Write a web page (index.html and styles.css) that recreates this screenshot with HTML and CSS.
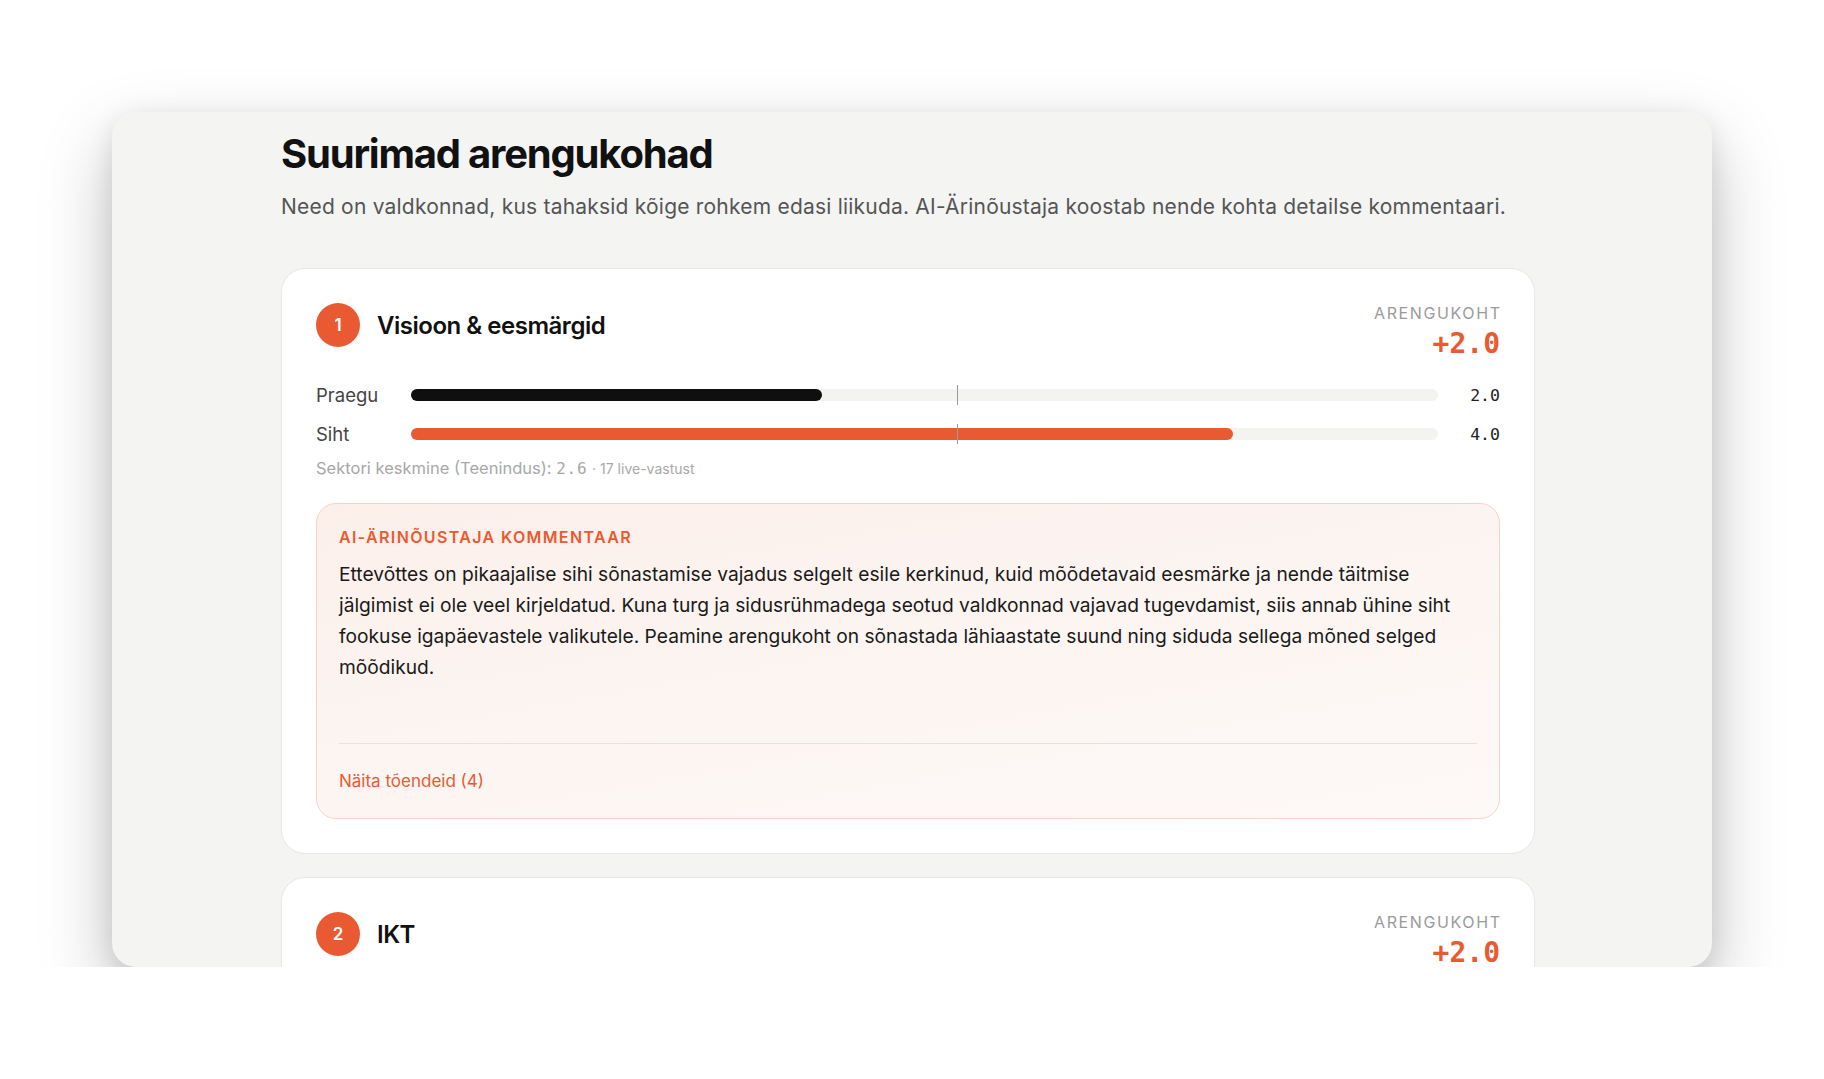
FILE: index.html
```html
<!DOCTYPE html>
<html lang="et">
<head>
<meta charset="utf-8">
<title>Suurimad arengukohad</title>
<link rel="stylesheet" href="styles.css">
</head>
<body>
<div class="window">
  <div class="content">
    <h1 class="title">Suurimad arengukohad</h1>
    <p class="subtitle">Need on valdkonnad, kus tahaksid kõige rohkem edasi liikuda. AI-Ärinõustaja koostab nende kohta detailse kommentaari.</p>

    <section class="card">
      <header class="card-head">
        <div class="card-name">
          <span class="badge">1</span>
          <h2 class="card-title">Visioon &amp; eesmärgid</h2>
        </div>
        <div class="gap-block">
          <div class="gap-label">Arengukoht</div>
          <div class="gap-value">+2.0</div>
        </div>
      </header>

      <div class="bars">
        <div class="bar-label">Praegu</div>
        <div class="track">
          <div class="fill fill-now" style="width:40%"></div>
          <div class="marker" style="left:53.2%"></div>
        </div>
        <div class="bar-value">2.0</div>

        <div class="bar-label">Siht</div>
        <div class="track">
          <div class="fill fill-target" style="width:80%"></div>
          <div class="marker" style="left:53.2%"></div>
        </div>
        <div class="bar-value">4.0</div>
      </div>

      <p class="sector">Sektori keskmine (Teenindus): <span class="mono">2.6</span> <span class="small">· 17 live-vastust</span></p>

      <div class="comment">
        <div class="comment-head">AI-Ärinõustaja kommentaar</div>
        <p class="comment-body">Ettevõttes on pikaajalise sihi sõnastamise vajadus selgelt esile kerkinud, kuid mõõdetavaid eesmärke ja nende täitmise jälgimist ei ole veel kirjeldatud. Kuna turg ja sidusrühmadega seotud valdkonnad vajavad tugevdamist, siis annab ühine siht fookuse igapäevastele valikutele. Peamine arengukoht on sõnastada lähiaastate suund ning siduda sellega mõned selged mõõdikud.</p>
        <div class="comment-foot">
          <a class="evidence" href="#">Näita tõendeid (4)</a>
        </div>
      </div>
    </section>

    <section class="card">
      <header class="card-head">
        <div class="card-name">
          <span class="badge">2</span>
          <h2 class="card-title">IKT</h2>
        </div>
        <div class="gap-block">
          <div class="gap-label">Arengukoht</div>
          <div class="gap-value">+2.0</div>
        </div>
      </header>
    </section>
  </div>
</div>
</body>
</html>
```

FILE: styles.css
```css
* { box-sizing: border-box; }

html, body {
  margin: 0;
  padding: 0;
  background: #ffffff;
}

body {
  font-family: Inter, "Noto Sans", "Liberation Sans", sans-serif;
  color: #111;
  padding-top: 112px;
}

.window {
  width: 1600px;
  height: 855px;
  margin: 0 0 0 112px;
  background: #f4f4f3;
  border-radius: 24px;
  overflow: hidden;
  box-shadow: 0 30px 70px rgba(0, 0, 0, 0.25), 0 6px 24px rgba(0, 0, 0, 0.09);
}

.content {
  width: 1254px;
  margin-left: 169px;
  padding-top: 18px;
}

.title {
  margin: 0;
  font-size: 40px;
  line-height: 48px;
  font-weight: 700;
  letter-spacing: -0.03em;
  color: #111;
}

.subtitle {
  margin: 15px 0 0;
  font-size: 21px;
  line-height: 28px;
  color: #555;
  letter-spacing: 0.01em;
}

.card {
  margin-top: 47px;
  background: #fff;
  border: 1px solid #e7e7e5;
  border-radius: 24px;
  padding: 33px 34px 34px 34px;
}

.card + .card {
  margin-top: 23px;
}

.card-head {
  display: flex;
  justify-content: space-between;
  align-items: flex-start;
}

.card-name {
  display: flex;
  align-items: center;
  gap: 17px;
  padding-top: 1px;
}

.badge {
  width: 44px;
  height: 44px;
  border-radius: 50%;
  background: #ea5a32;
  color: #fff;
  font-weight: 600;
  font-size: 17px;
  display: flex;
  align-items: center;
  justify-content: center;
}

.card-title {
  margin: 0;
  font-size: 24px;
  font-weight: 600;
  letter-spacing: -0.02em;
  color: #111;
}

.gap-block {
  text-align: right;
}

.gap-label {
  margin-top: 1px;
  font-size: 16px;
  line-height: 20px;
  letter-spacing: 0.1em;
  margin-right: -0.1em;
  text-transform: uppercase;
  color: #9b9b9b;
}

.gap-value {
  margin-top: 3px;
  font-family: "DejaVu Sans Mono", "Liberation Mono", monospace;
  font-weight: 700;
  font-size: 28px;
  line-height: 36px;
  color: #ea5a32;
}

.bars {
  display: grid;
  grid-template-columns: 80px 1fr 47px;
  column-gap: 15px;
  row-gap: 11px;
  align-items: center;
  margin-top: 19px;
}

.bar-label {
  font-size: 18.5px;
  line-height: 28px;
  color: #444;
}

.track {
  position: relative;
  height: 12px;
  background: #f3f3f2;
  border-radius: 6px;
}

.fill {
  height: 100%;
  border-radius: 6px;
}

.fill-now { background: #0f0f0f; }
.fill-target { background: #ea5a32; }

.marker {
  position: absolute;
  top: -4px;
  width: 1px;
  height: 20px;
  background: #9a9a9a;
}

.bar-value {
  text-align: right;
  font-family: "DejaVu Sans Mono", "Liberation Mono", monospace;
  font-size: 16.5px;
  color: #222;
}

.sector {
  margin: 9px 0 0;
  font-size: 16.5px;
  line-height: 22px;
  color: #a8a8a8;
}

.sector .mono {
  font-family: "DejaVu Sans Mono", "Liberation Mono", monospace;
  font-size: 16px;
  letter-spacing: 0.05em;
}

.sector .small {
  font-size: 14px;
}

.comment {
  margin-top: 23px;
  border: 1px solid #f7d3c6;
  border-radius: 20px;
  background: linear-gradient(170deg, #fcefea 0%, #fcf5f2 50%, #fdf9f7 100%);
  padding: 23px 22px 27px 22px;
}

.comment-head {
  font-size: 16px;
  line-height: 20px;
  font-weight: 600;
  letter-spacing: 0.085em;
  text-transform: uppercase;
  color: #ea5a32;
}

.comment-body {
  margin: 12px 0 0;
  font-size: 19.2px;
  line-height: 31px;
  color: #1a1a1a;
}

.comment-foot {
  margin-top: 60px;
  border-top: 1px solid #f6ddd4;
  padding-top: 27px;
}

.evidence {
  display: block;
  font-size: 17px;
  line-height: 20px;
  color: #ea5a32;
  text-decoration: none;
}
```
